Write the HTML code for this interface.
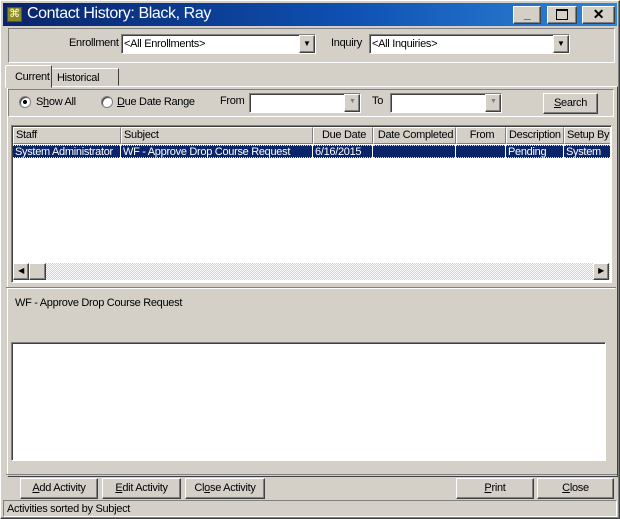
<!DOCTYPE html>
<html><head><style>
*{box-sizing:border-box;margin:0;padding:0}
body{width:620px;height:519px;background:#d4d0c8;position:relative;overflow:hidden;font-family:"Liberation Sans",Arial,sans-serif;font-size:11px;letter-spacing:-0.3px;color:#000}
.a{position:absolute}
.r{border:1px solid;border-color:#fff #404040 #404040 #fff;box-shadow:inset -1px -1px 0 #808080}
.s{border:1px solid;border-color:#808080 #fff #fff #808080;box-shadow:inset 1px 1px 0 #404040}
.e{border:1px solid;border-color:#808080 #fff #fff #808080}
.btn{position:absolute;background:#d4d0c8;text-align:center;line-height:18px}
.combo{position:absolute;background:#fff}
.dd{position:absolute;right:0;top:0;bottom:0;width:16px;background:#d4d0c8}
.hd{position:absolute;top:0;height:17px;background:#d4d0c8;line-height:15px;padding-left:2px;border:1px solid;border-color:#fff #808080 #808080 #fff}
.cell{position:absolute;top:18px;height:13px;background:#0a246a;color:#fff;line-height:12px;padding-left:2px;border-bottom:1px dotted #ff0;border-top:1px dotted #ff0}
u{text-decoration:underline}
</style></head><body>
<div class="a r" style="left:0;top:0;width:620px;height:519px"></div>
<div class="a" style="left:3px;top:3px;width:614px;height:23px;background:linear-gradient(90deg,#0a246a,#0e4fb0 55%,#2f86d8)"></div>
<div class="a" style="left:7px;top:7px;width:15px;height:15px;background:#8b8b1e;border:1px solid #5a5a10;color:#fff;font-size:11px;line-height:12px;text-align:center">⌘</div>
<div class="a" style="left:27px;top:5px;color:#fff;font-size:16px;letter-spacing:-0.4px">Contact History: Black, Ray</div>
<div class="btn r" style="left:513px;top:6px;width:28px;height:18px;font-weight:bold;line-height:14px;font-size:12px">_</div>
<div class="btn r" style="left:547px;top:6px;width:30px;height:18px"><div class="a" style="left:8px;top:2px;width:12px;height:11px;border:1px solid #000;border-top-width:2px"></div></div>
<div class="btn r" style="left:582px;top:6px;width:33px;height:18px;font-weight:bold;font-size:14px;line-height:15px">✕</div>
<div class="a e" style="left:8px;top:28px;width:607px;height:35px"></div>
<div class="a" style="left:69px;top:37px">Enrollment</div>
<div class="combo s" style="left:121px;top:34px;width:195px;height:20px"><span class="a" style="left:2px;top:3px">&lt;All Enrollments&gt;</span><div class="dd r"><span class="a" style="left:3px;top:3px;font-size:8px">▼</span></div></div>
<div class="a" style="left:331px;top:37px">Inquiry</div>
<div class="combo s" style="left:369px;top:34px;width:201px;height:20px"><span class="a" style="left:2px;top:3px">&lt;All Inquiries&gt;</span><div class="dd r"><span class="a" style="left:3px;top:3px;font-size:8px">▼</span></div></div>
<div class="a" style="left:7px;top:86px;width:611px;height:391px;border:1px solid;border-color:#fff #404040 #404040 #fff"></div>
<div class="a" style="left:51px;top:68px;width:68px;height:18px;border:1px solid;border-color:#fff #404040 transparent transparent;padding:3px 0 0 5px">Historical</div>
<div class="a" style="left:5px;top:65px;width:47px;height:23px;background:#d4d0c8;border:1px solid;border-color:#fff #404040 transparent #fff;border-radius:2px 2px 0 0;padding:5px 0 0 9px">Current</div>
<div class="a e" style="left:8px;top:89px;width:606px;height:28px"></div>
<div class="a" style="left:19px;top:96px;width:12px;height:12px;border-radius:50%;background:#fff;border:1px solid #808080;box-shadow:inset 1px 1px 0 #404040"><div class="a" style="left:3px;top:3px;width:4px;height:4px;background:#000;border-radius:50%"></div></div>
<div class="a" style="left:36px;top:96px">S<u>h</u>ow All</div>
<div class="a" style="left:101px;top:96px;width:12px;height:12px;border-radius:50%;background:#fff;border:1px solid #808080;box-shadow:inset 1px 1px 0 #404040"></div>
<div class="a" style="left:117px;top:96px"><u>D</u>ue Date Range</div>
<div class="a" style="left:220px;top:95px">From</div>
<div class="combo s" style="left:249px;top:93px;width:112px;height:20px"><div class="dd r"><span class="a" style="left:4px;top:3px;font-size:7px;color:#808080">▼</span></div></div>
<div class="a" style="left:372px;top:95px">To</div>
<div class="combo s" style="left:390px;top:93px;width:112px;height:20px"><div class="dd r"><span class="a" style="left:4px;top:3px;font-size:7px;color:#808080">▼</span></div></div>
<div class="btn r" style="left:543px;top:93px;width:55px;height:21px"><u>S</u>earch</div>
<div class="a s" style="left:11px;top:125px;width:601px;height:158px;background:#fff"></div>
<div class="a" style="left:13px;top:127px;width:597px;height:136px;overflow:hidden">
<div class="hd" style="left:0;width:108px">Staff</div>
<div class="hd" style="left:108px;width:192px">Subject</div>
<div class="hd" style="left:300px;width:60px;text-align:center">Due Date</div>
<div class="hd" style="left:360px;width:83px;text-align:center">Date Completed</div>
<div class="hd" style="left:443px;width:50px;text-align:center">From</div>
<div class="hd" style="left:493px;width:58px">Description</div>
<div class="hd" style="left:551px;width:60px">Setup By</div>
<div class="cell" style="left:0;width:107px">System Administrator</div>
<div class="cell" style="left:108px;width:191px">WF - Approve Drop Course Request</div>
<div class="cell" style="left:300px;width:59px">6/16/2015</div>
<div class="cell" style="left:360px;width:82px"></div>
<div class="cell" style="left:443px;width:49px"></div>
<div class="cell" style="left:493px;width:57px">Pending</div>
<div class="cell" style="left:551px;width:60px">System Admin</div>
</div>
<div class="a" style="left:13px;top:263px;width:597px;height:17px;background:repeating-conic-gradient(#d4d0c8 0 25%,#fff 0 50%) 0 0/2px 2px"></div>
<div class="btn r" style="left:13px;top:263px;width:16px;height:17px;font-size:8px;line-height:14px">◀</div>
<div class="btn r" style="left:29px;top:263px;width:17px;height:17px"></div>
<div class="btn r" style="left:593px;top:263px;width:16px;height:17px;font-size:8px;line-height:14px">▶</div>
<div class="a" style="left:8px;top:288px;width:607px;height:1px;background:#fff"></div>
<div class="a" style="left:6px;top:287px;width:610px;height:1px;background:#808080"></div>
<div class="a" style="left:15px;top:297px;font-size:11px">WF - Approve Drop Course Request</div>
<div class="a s" style="left:11px;top:342px;width:595px;height:119px;background:#fff"></div>
<div class="a" style="left:6px;top:474px;width:611px;height:1px;background:#808080"></div>
<div class="btn r" style="left:20px;top:478px;width:78px;height:21px"><u>A</u>dd Activity</div>
<div class="btn r" style="left:102px;top:478px;width:79px;height:21px"><u>E</u>dit Activity</div>
<div class="btn r" style="left:185px;top:478px;width:80px;height:21px">Cl<u>o</u>se Activity</div>
<div class="btn r" style="left:456px;top:478px;width:78px;height:21px"><u>P</u>rint</div>
<div class="btn r" style="left:537px;top:478px;width:77px;height:21px"><u>C</u>lose</div>
<div class="a e" style="left:3px;top:500px;width:614px;height:17px;padding:2px 0 0 3px">Activities sorted by Subject</div>
</body></html>
